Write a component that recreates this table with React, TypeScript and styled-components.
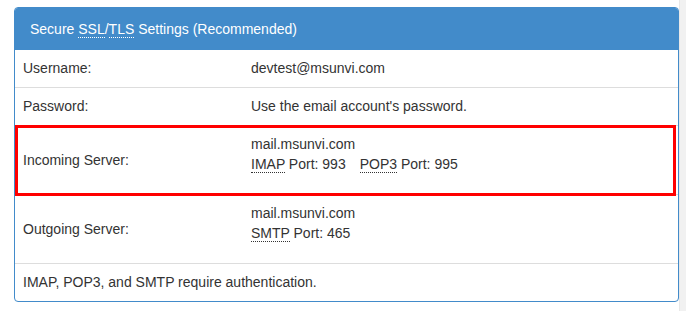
import React from "react";
import styled, { createGlobalStyle } from "styled-components";

const Global = createGlobalStyle`
  html, body { margin: 0; padding: 0; background: #fff; }
  body { font-family: "Liberation Sans", Arial, sans-serif; font-size: 14px; color: #333; }
`;

const Page = styled.div`
  display: flex;
  width: 686px;
  height: 311px;
  overflow: hidden;
`;

const Main = styled.div`
  flex: 1;
  padding: 7px 0 0 14px;
`;

const Scrollbar = styled.div`
  width: 7px;
  background: #f1f1f1;
  border-left: 1px solid #e8e8e8;
`;

const Panel = styled.section`
  width: 665px;
  box-sizing: border-box;
  border: 1px solid #428bca;
  border-radius: 4px;
`;

const Heading = styled.header`
  background: #428bca;
  color: #fff;
  padding: 11px 15px;
  line-height: 20px;
  font-size: 14px;
  border-radius: 3px 3px 0 0;
`;

const Abbr = styled.abbr<{ $light?: boolean }>`
  text-decoration: none;
  border-bottom: 1px dotted ${(p) => (p.$light ? "#fff" : "#333")};
  cursor: help;
`;

const Row = styled.div<{ $first?: boolean; $marked?: boolean }>`
  position: relative;
  display: grid;
  grid-template-columns: 228px 1fr;
  align-items: center;
  border-top: ${(p) => (p.$first ? "none" : "1px solid #ddd")};
  line-height: 20px;
  ${(p) =>
    p.$marked &&
    `
    z-index: 1;
    &::after {
      content: "";
      position: absolute;
      left: 0;
      right: 2px;
      top: -1px;
      bottom: -2px;
      border: 3px solid #ff0000;
      pointer-events: none;
      z-index: 2;
    }
  `}
`;

const Label = styled.div`
  padding: 8px 8px 9px;
`;

const Value = styled.div<{ $tall?: boolean }>`
  padding: 8px 8px ${(p) => (p.$tall ? "20px" : "9px")};
`;

const Note = styled.div`
  border-top: 1px solid #ddd;
  padding: 8px 8px 9px;
  line-height: 20px;
`;

const Gap = styled.span`
  display: inline-block;
  width: 14px;
`;

export default function App() {
  return (
    <>
      <Global />
      <Page>
        <Main>
          <Panel>
            <Heading>
              Secure <Abbr $light title="Secure Sockets Layer">SSL</Abbr>/
              <Abbr $light title="Transport Layer Security">TLS</Abbr> Settings
              (Recommended)
            </Heading>
            <Row $first>
              <Label>Username:</Label>
              <Value>devtest@msunvi.com</Value>
            </Row>
            <Row>
              <Label>Password:</Label>
              <Value>Use the email account's password.</Value>
            </Row>
            <Row $marked>
              <Label>Incoming Server:</Label>
              <Value $tall>
                mail.msunvi.com
                <br />
                <Abbr title="Internet Message Access Protocol">IMAP</Abbr> Port: 993
                <Gap />
                <Abbr title="Post Office Protocol 3">POP3</Abbr> Port: 995
              </Value>
            </Row>
            <Row>
              <Label>Outgoing Server:</Label>
              <Value $tall>
                mail.msunvi.com
                <br />
                <Abbr title="Simple Mail Transfer Protocol">SMTP</Abbr> Port: 465
              </Value>
            </Row>
            <Note>IMAP, POP3, and SMTP require authentication.</Note>
          </Panel>
        </Main>
        <Scrollbar />
      </Page>
    </>
  );
}
